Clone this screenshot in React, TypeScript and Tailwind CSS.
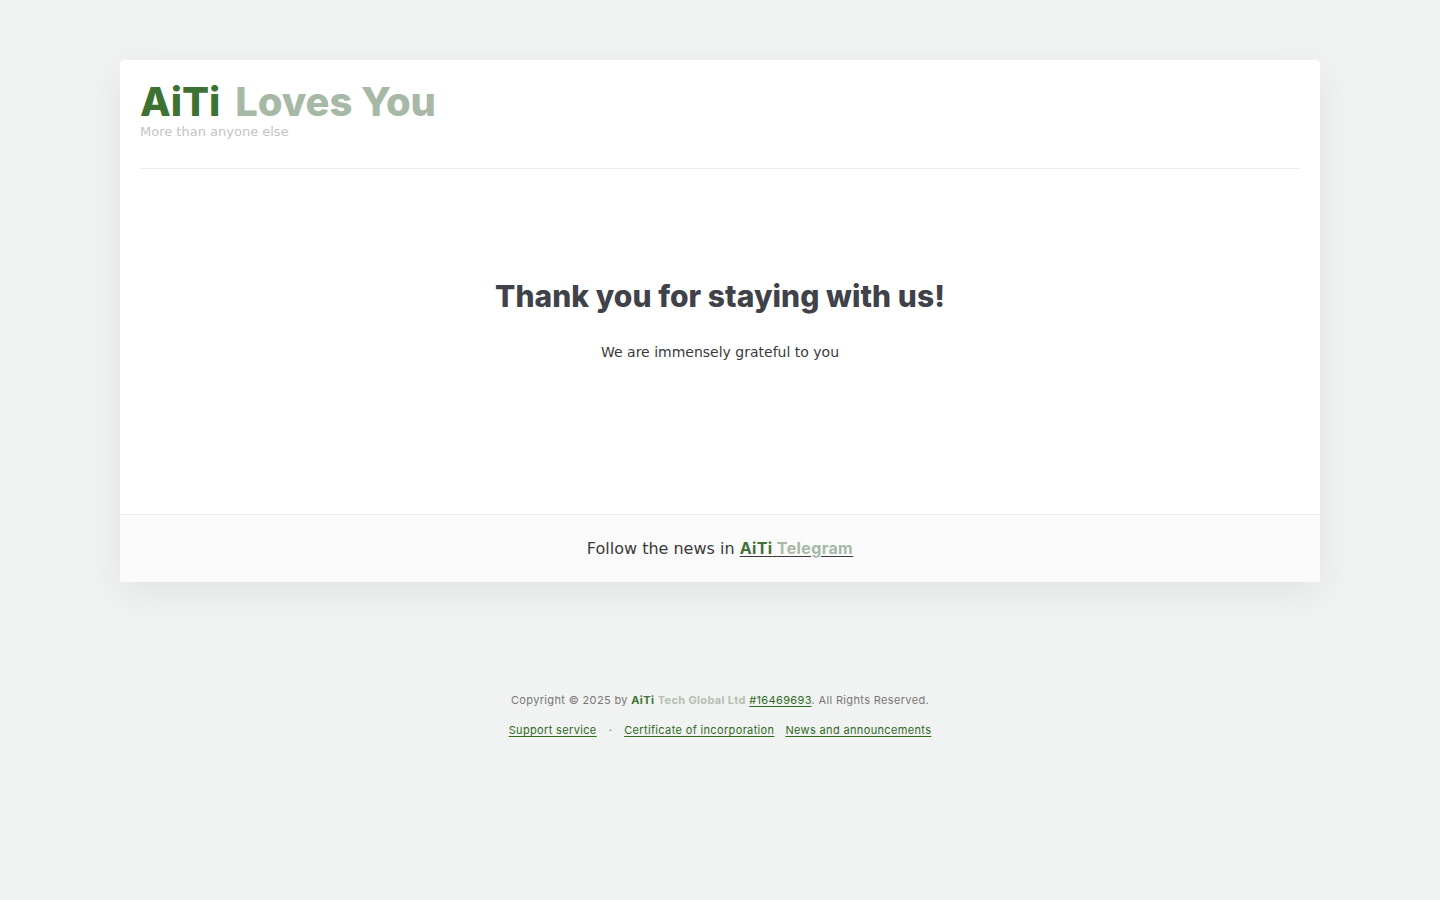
import React from "react";

const rubik = { fontFamily: "Inter, 'Noto Sans', sans-serif" };

const App: React.FC = () => {
  return (
    <div
      className="min-h-screen bg-[#f1f2f2] pt-[60px] pb-10"
      style={{ fontFamily: "'DejaVu Sans', sans-serif" }}
    >
      <div className="mx-auto w-[1200px] rounded-[4px] bg-white shadow-[0_10px_40px_rgba(0,0,0,0.07)]">
        {/* Header */}
        <div className="px-5 pt-[20px]">
          <div className="pb-[28px] border-b border-[#ececec]">
            <h1
              className="flex gap-[15px] text-[40px] leading-[44px] font-extrabold tracking-[-0.1px]"
              style={rubik}
            >
              <span className="text-[#3d7233]">AiTi</span>
              <span className="text-[#a8b8a6]">Loves You</span>
            </h1>
            <p className="text-[13px] leading-[16px] text-[#c4c4c4]">More than anyone else</p>
          </div>
        </div>

        {/* Main */}
        <div className="pt-[109px] pb-[152px] text-center">
          <h2
            className="text-[30px] leading-[36px] font-extrabold text-[#3f4249] tracking-[0.05px]"
            style={rubik}
          >
            Thank you for staying with us!
          </h2>
          <p className="mt-[28px] text-sm leading-5 text-[#3a3a3a]">We are immensely grateful to you</p>
        </div>

        {/* Footer bar */}
        <div className="border-t border-[#eeeeee] bg-[#fafafa] rounded-b-[4px] py-[22px] text-center">
          <p className="text-base leading-[22px] text-[#3a3a3a]">
            Follow the news in{" "}
            <a href="#" className="underline underline-offset-2 font-bold tracking-[0.4px]" style={rubik}>
              <span className="text-[#3d7233]">AiTi</span>{" "}
              <span className="text-[#a8b8a6]">Telegram</span>
            </a>
          </p>
        </div>
      </div>

      {/* Page footer */}
      <div className="mt-[110px] text-center tracking-[0.35px]" style={rubik}>
        <p className="text-[11px] leading-4 text-[#777]">
          Copyright © 2025 by <span className="font-bold text-[#3d7233]">AiTi</span>{" "}
          <span className="font-bold text-[#b5c0b3]">Tech Global Ltd</span>{" "}
          <a href="#" className="text-[#2f6a1e] underline underline-offset-2">#16469693</a>. All Rights Reserved.
        </p>
        <div className="mt-[14px] flex justify-center items-center gap-[11px] text-[11px] leading-4">
          <a href="#" className="text-[#2f6a1e] underline underline-offset-2">Support service</a>
          <span className="text-[#777] px-[1px]">·</span>
          <a href="#" className="text-[#2f6a1e] underline underline-offset-2">Certificate of incorporation</a>
          <a href="#" className="text-[#2f6a1e] underline underline-offset-2">News and announcements</a>
        </div>
      </div>
    </div>
  );
};

export default App;
